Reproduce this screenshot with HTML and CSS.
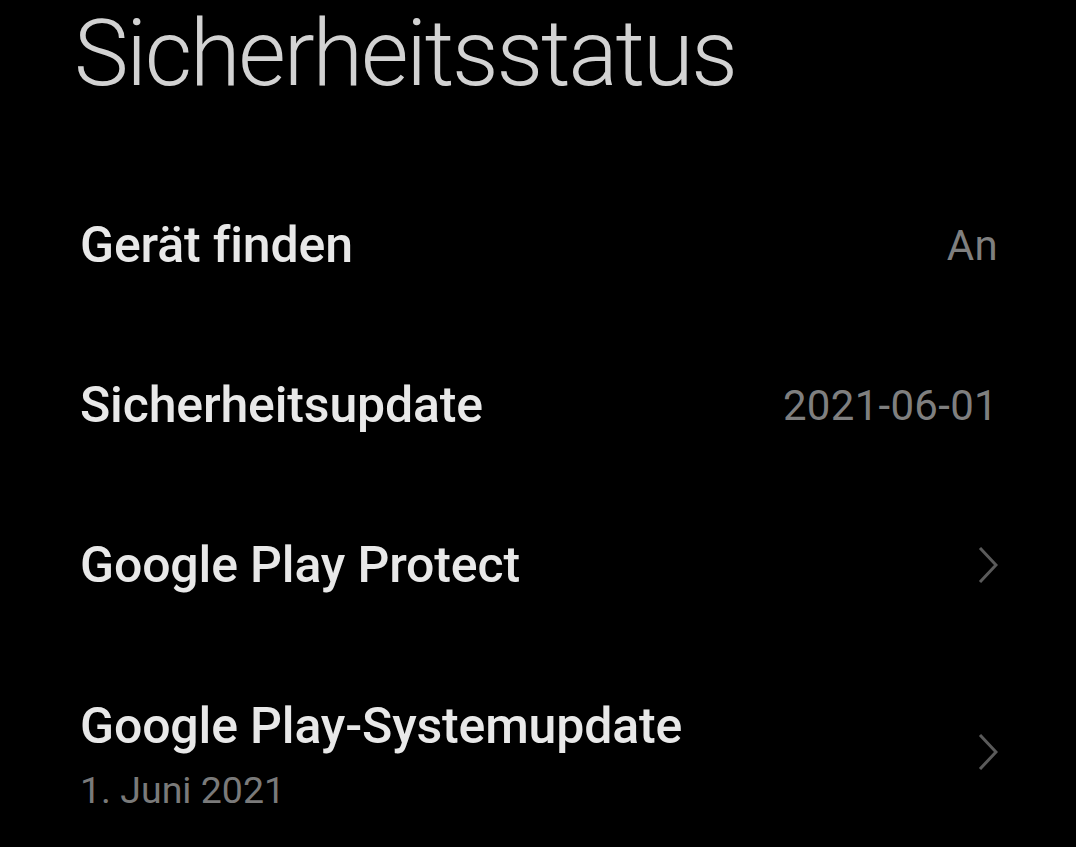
FILE: index.html
```html
<!DOCTYPE html>
<html lang="de">
<head>
    <meta charset="UTF-8">
    <meta name="viewport" content="width=device-width, initial-scale=1.0">
    <title>Sicherheitsstatus</title>
    <link rel="stylesheet" href="styles.css">
</head>
<body>
<div class="screen">
    <h1 class="title">Sicherheitsstatus</h1>
    <div class="list">
        <div class="row">
            <div class="label">Gerät finden</div>
            <div class="value">An</div>
        </div>
        <div class="row">
            <div class="label">Sicherheitsupdate</div>
            <div class="value">2021-06-01</div>
        </div>
        <div class="row">
            <div class="label">Google Play Protect</div>
            <svg class="chevron" viewBox="0 0 20 36" width="20" height="36">
                <path d="M2 1 L18 18 L2 35" fill="none" stroke="#5a5a5a" stroke-width="3"/>
            </svg>
        </div>
        <div class="row row-tall">
            <div class="text">
                <div class="label">Google Play-Systemupdate</div>
                <div class="sub">1. Juni 2021</div>
            </div>
            <svg class="chevron" viewBox="0 0 20 36" width="20" height="36">
                <path d="M2 1 L18 18 L2 35" fill="none" stroke="#5a5a5a" stroke-width="3"/>
            </svg>
        </div>
    </div>
</div>
</body>
</html>
```

FILE: styles.css
```css
html, body {
    margin: 0;
    background: #000;
}

body {
    font-family: 'Roboto', 'Noto Sans', sans-serif;
    color: #e6e6e6;
    overflow: hidden;
}

.screen {
    padding: 0 78px 0 80px;
}

.title {
    margin: -6px 0 0 -6px;
    font-size: 92px;
    font-weight: 300;
    line-height: 120px;
    letter-spacing: -2.2px;
    color: #d2d2d2;
}

.list {
    margin-top: 51px;
}

.row {
    display: flex;
    align-items: center;
    justify-content: space-between;
    height: 160px;
}

.row-tall {
    height: auto;
    padding-top: 51px;
}

.row-tall .chevron {
    margin-top: -8px;
}

.label {
    font-size: 50px;
    line-height: 60px;
    font-weight: 500;
    letter-spacing: -0.15px;
    color: #e8e8e8;
}

.value {
    font-size: 42px;
    letter-spacing: 0.3px;
    color: #7f7f7f;
}

.sub {
    font-size: 37.5px;
    line-height: 50px;
    color: #7a7a7a;
    margin-top: 9px;
}

.chevron {
    display: block;
}
```
